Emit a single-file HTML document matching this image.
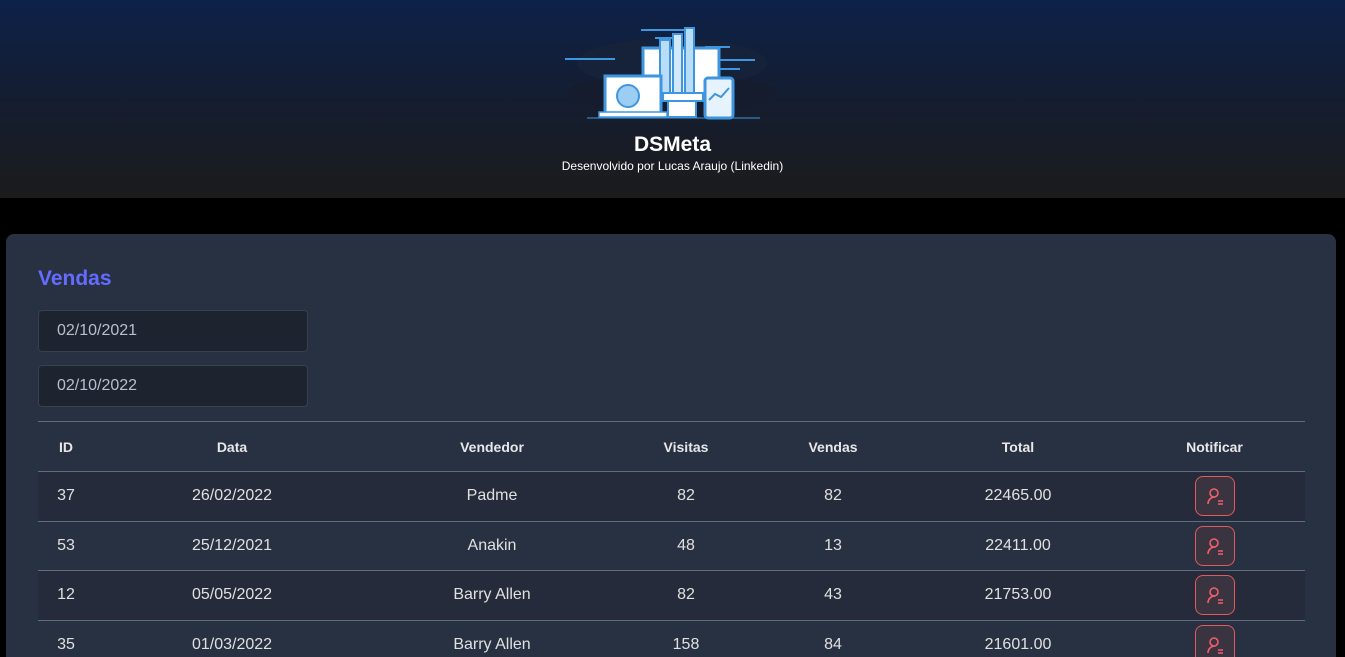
<!DOCTYPE html>
<html style="height:657px;overflow:hidden"><head><meta charset="utf-8"><style>
*{margin:0;padding:0;box-sizing:border-box}
body{width:1345px;height:657px;overflow:hidden;background:#000;font-family:"Liberation Sans",Roboto,sans-serif;color:#e0e0e0;position:relative}
header{height:198px;background:linear-gradient(#0e2149 0%,#151d2e 55%,#1b1b1c 100%);position:relative;text-align:center}
header svg{position:absolute;left:565px;top:18px}
header h1{position:absolute;top:133px;width:100%;font-size:21px;color:#fff;font-weight:bold}
header p{position:absolute;top:159px;width:100%;font-size:12px;color:#fff}
.card{position:absolute;left:6px;top:234px;width:1330px;height:423px;background:#283142;border-radius:8px 8px 0 0}
h2{position:absolute;left:32px;top:33px;font-size:21px;color:#646cff;font-weight:bold}
.inp{position:absolute;left:32px;width:270px;height:42px;background:#1d2430;border:1px solid #36404f;border-radius:4px;font-size:16px;color:#b6c0cc;padding:11px 18px}
table{position:absolute;left:32px;top:187px;width:1267px;border-collapse:collapse;font-size:16px}
th{font-size:14px;font-weight:bold;height:50px;color:#e8e8e8;border-top:1px solid #606b7c}
td{height:49.5px;text-align:center;border-top:1px solid #606b7c;color:#e0e0e0}
tr.d td{background:#252b3a}
.b{display:inline-block;width:40px;height:40px;border:1px solid #e05a5e;border-radius:8px;background:#3a3340;vertical-align:middle;padding-top:9px}
</style></head><body>
<header>
<svg width="215" height="102" viewBox="0 0 215 102">
<ellipse cx="107" cy="45" rx="95" ry="25" fill="#16223a"/>
<ellipse cx="60" cy="75" rx="58" ry="15" fill="#141c2e"/>
<ellipse cx="160" cy="75" rx="50" ry="14" fill="#141c2e"/>
<g stroke="#3f96e0" stroke-width="2">
<line x1="76" y1="12" x2="120" y2="12"/><line x1="90" y1="20" x2="110" y2="20"/><line x1="140" y1="29" x2="165" y2="29"/><line x1="0" y1="41" x2="50" y2="41"/><line x1="153" y1="42" x2="190" y2="42"/><line x1="145" y1="51" x2="175" y2="51"/></g>
<rect x="78" y="30" width="76" height="50" fill="#fff" stroke="#3f96e0" stroke-width="3"/>
<rect x="95" y="22" width="10" height="58" fill="#b9dcf7" stroke="#3f96e0" stroke-width="2"/>
<rect x="108" y="16" width="9" height="64" fill="#d3e9fa" stroke="#3f96e0" stroke-width="2"/>
<rect x="120" y="10" width="9" height="70" fill="#b9dcf7" stroke="#3f96e0" stroke-width="2"/>
<rect x="98" y="75" width="40" height="8" fill="#fff" stroke="#3f96e0" stroke-width="2"/>
<rect x="103" y="83" width="28" height="16" fill="#fff" stroke="#3f96e0" stroke-width="2"/>
<rect x="40" y="58" width="56" height="38" fill="#fff" stroke="#3f96e0" stroke-width="3"/>
<rect x="34" y="94" width="68" height="5" fill="#fff" stroke="#3f96e0" stroke-width="1.5"/>
<circle cx="63" cy="78" r="11" fill="#9ccdf3" stroke="#3f96e0" stroke-width="2"/>
<rect x="140" y="60" width="28" height="40" rx="3" fill="#e6f2fc" stroke="#3f96e0" stroke-width="3"/>
<polyline points="144,82 150,76 156,79 164,70" fill="none" stroke="#3f96e0" stroke-width="2"/>
<line x1="22" y1="100" x2="195" y2="100" stroke="#3f96e0" stroke-width="1"/>
</svg>
<h1>DSMeta</h1>
<p>Desenvolvido por Lucas Araujo (Linkedin)</p>
</header>
<div class="card">
<h2>Vendas</h2>
<div class="inp" style="top:76px">02/10/2021</div>
<div class="inp" style="top:131px">02/10/2022</div>
<table>
<tr><th style="width:56px">ID</th><th style="width:276px">Data</th><th style="width:244px">Vendedor</th><th style="width:144px">Visitas</th><th style="width:150px">Vendas</th><th style="width:220px">Total</th><th style="padding-right:4px">Notificar</th></tr>
<tr class="d"><td>37</td><td>26/02/2022</td><td>Padme</td><td>82</td><td>82</td><td>22465.00</td><td style="padding-right:4px"><span class="b"><svg width="22" height="22" viewBox="0 0 22 22" fill="none" stroke="#f0606a" stroke-width="1.6"><circle cx="10" cy="7" r="4"/><path d="M4 18c0-4 3-7 7-7"/><path d="M14 15h5M14 18h5"/></svg></span></td></tr>
<tr><td>53</td><td>25/12/2021</td><td>Anakin</td><td>48</td><td>13</td><td>22411.00</td><td style="padding-right:4px"><span class="b"><svg width="22" height="22" viewBox="0 0 22 22" fill="none" stroke="#f0606a" stroke-width="1.6"><circle cx="10" cy="7" r="4"/><path d="M4 18c0-4 3-7 7-7"/><path d="M14 15h5M14 18h5"/></svg></span></td></tr>
<tr class="d"><td>12</td><td>05/05/2022</td><td>Barry Allen</td><td>82</td><td>43</td><td>21753.00</td><td style="padding-right:4px"><span class="b"><svg width="22" height="22" viewBox="0 0 22 22" fill="none" stroke="#f0606a" stroke-width="1.6"><circle cx="10" cy="7" r="4"/><path d="M4 18c0-4 3-7 7-7"/><path d="M14 15h5M14 18h5"/></svg></span></td></tr>
<tr><td>35</td><td>01/03/2022</td><td>Barry Allen</td><td>158</td><td>84</td><td>21601.00</td><td style="padding-right:4px"><span class="b"><svg width="22" height="22" viewBox="0 0 22 22" fill="none" stroke="#f0606a" stroke-width="1.6"><circle cx="10" cy="7" r="4"/><path d="M4 18c0-4 3-7 7-7"/><path d="M14 15h5M14 18h5"/></svg></span></td></tr>
</table>
</div>
</body></html>
